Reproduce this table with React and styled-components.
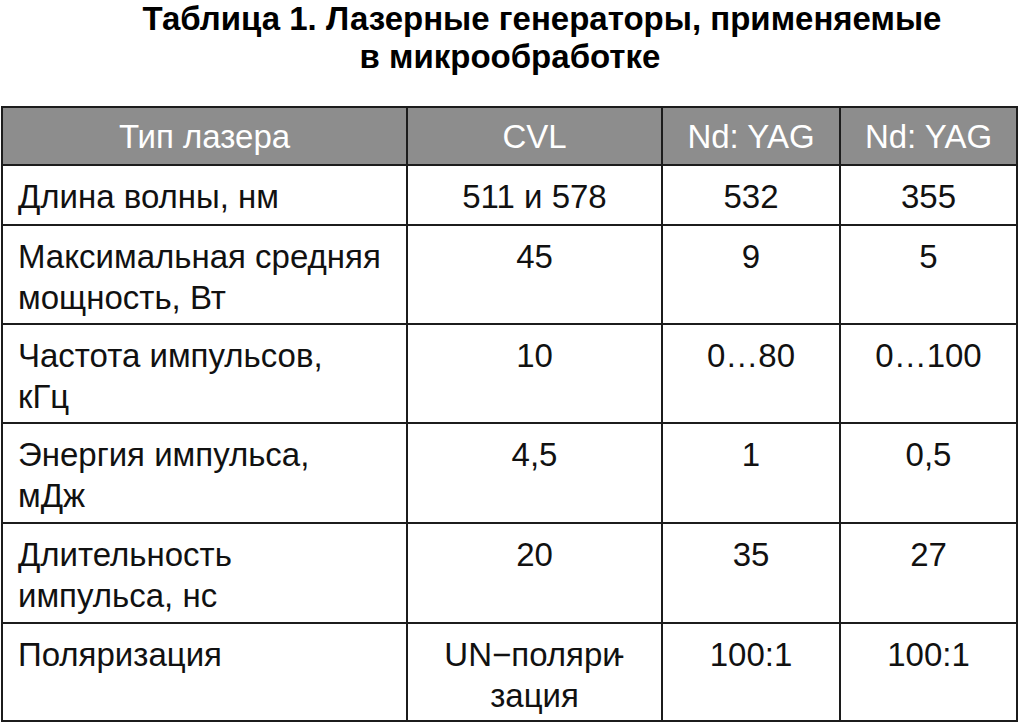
import React from "react";
import styled, { createGlobalStyle } from "styled-components";

const GlobalStyle = createGlobalStyle`
  html, body {
    margin: 0;
    padding: 0;
    background: #fff;
  }
  body {
    font-family: "Liberation Sans", Arial, sans-serif;
    color: #111;
  }
`;

const Page = styled.div`
  width: 1020px;
  height: 722px;
  overflow: hidden;
`;

const Title = styled.h1`
  margin: 0 0 30px;
  padding-left: 64px;
  font-size: 33px;
  line-height: 38px;
  font-weight: 700;
  text-align: center;
  color: #000;
`;

const TitleLine = styled.span`
  display: block;
  padding-right: ${props => props.shift || 0}px;
`;

const Table = styled.div`
  display: grid;
  grid-template-columns: 405px 255px 178px 177px;
  grid-template-rows: 58px 60px 99px 99px 100px 100px 98px;
  margin-left: 1px;
  border-top: 2px solid #1c1c1c;
  border-left: 2px solid #1c1c1c;
  width: max-content;
`;

const Cell = styled.div`
  box-sizing: border-box;
  border-right: 2px solid #1c1c1c;
  border-bottom: 2px solid #1c1c1c;
  padding: ${props => (props.head ? "8px 6px 0" : "10px 6px 0")};
  padding-left: ${props => (props.left && !props.head ? "15px" : "6px")};
  font-size: 33px;
  line-height: 41px;
  white-space: nowrap;
  text-align: ${props => (props.left ? "left" : "center")};
  background: ${props => (props.head ? "#8d8d8d" : "#fff")};
  color: ${props => (props.head ? "#fff" : "#111")};
`;

const Hyphen = styled.span`
  margin-left: -7px;
`;

const header = ["Тип лазера", "CVL", "Nd: YAG", "Nd: YAG"];

const rows = [
  [["Длина волны, нм"], "511 и 578", "532", "355"],
  [["Максимальная средняя", "мощность, Вт"], "45", "9", "5"],
  [["Частота импульсов,", "кГц"], "10", "0…80", "0…100"],
  [["Энергия импульса,", "мДж"], "4,5", "1", "0,5"],
  [["Длительность", "импульса, нс"], "20", "35", "27"],
  [["Поляризация"], "polar", "100:1", "100:1"],
];

const Lines = ({ lines }) =>
  lines.map((l, i) => (
    <React.Fragment key={i}>
      {i > 0 && <br />}
      {l}
    </React.Fragment>
  ));

const Value = ({ v }) =>
  v === "polar" ? (
    <>
      UN−поляри<Hyphen>-</Hyphen>
      <br />
      зация
    </>
  ) : (
    v
  );

export default function App() {
  return (
    <Page>
      <GlobalStyle />
      <Title>
        <TitleLine>Таблица 1. Лазерные генераторы, применяемые</TitleLine>
        <TitleLine shift={64}>в микрообработке</TitleLine>
      </Title>
      <Table>
        {header.map((h, i) => (
          <Cell head left={i === 0 ? false : false} key={"h" + i}>
            {h}
          </Cell>
        ))}
        {rows.map((r, ri) => (
          <React.Fragment key={ri}>
            <Cell left>
              <Lines lines={r[0]} />
            </Cell>
            {r.slice(1).map((v, ci) => (
              <Cell key={ci}>
                <Value v={v} />
              </Cell>
            ))}
          </React.Fragment>
        ))}
      </Table>
    </Page>
  );
}
